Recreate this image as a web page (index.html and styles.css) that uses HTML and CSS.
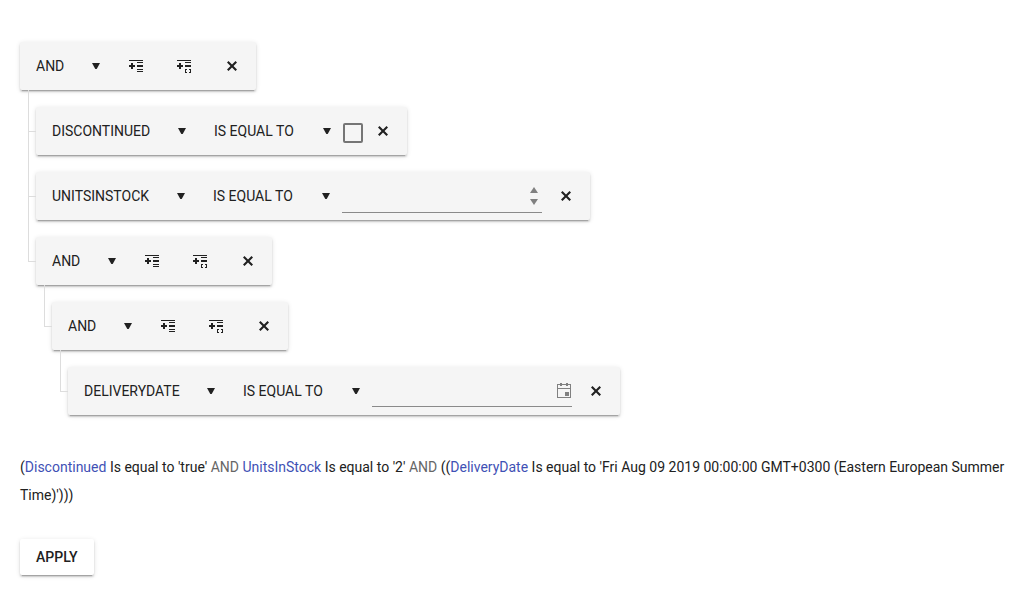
FILE: index.html
```html
<!DOCTYPE html>
<html lang="en">
<head>
<meta charset="utf-8">
<meta name="viewport" content="width=device-width, initial-scale=1">
<title>Filter</title>
<link rel="stylesheet" href="styles.css">
</head>
<body>
<svg class="symbols" aria-hidden="true">
  <symbol id="caret" viewBox="0 0 16 16"><path d="M4 5h8L8.700 11H7.300z"/></symbol>
  <symbol id="add-expression" viewBox="0 0 16 16"><path d="M1 2h14v1H1zM3 5h2v2h2v2H5v2H3V9H1V7h2zM9 4h6v1H9zM9 7h6v2H9zM9 11h6v1H9zM9 13h6v1H9z"/></symbol>
  <symbol id="add-group" viewBox="0 0 16 16"><path d="M1 2h14v1H1zM3 5h2v2h2v2H5v2H3V9H1V7h2zM9 4h6v1H9zM9 7h6v2H9zM9 11h2v1h-1v2h1v1H9zM13 11h2v4h-2v-1h1v-2h-1z"/></symbol>
  <symbol id="close" viewBox="0 0 16 16"><path d="M4.500 3L8 6.500 11.500 3 13 4.500 9.500 8 13 11.500 11.500 13 8 9.500 4.500 13 3 11.500 6.500 8 3 4.500z"/></symbol>
  <symbol id="calendar" viewBox="0 0 16 16"><path d="M1 2h3V1h2v1h4V1h2v1h3v14H1zM2 3v3h12V3h-2v1h-2V3H6v1H4V3zM2 7v8h12V7zM9 10h4v4H9z"/></symbol>
</svg>
<main class="page">
  <ul class="filter">
    <li class="filter-item">
      <div class="toolbar">
        <label class="dropdown"><select aria-label="Group logic"><option>AND</option></select><svg class="icon"><use href="#caret"/></svg></label>
        <button class="tool" type="button" aria-label="Add expression"><svg class="icon"><use href="#add-expression"/></svg></button>
        <button class="tool" type="button" aria-label="Add group"><svg class="icon"><use href="#add-group"/></svg></button>
        <button class="tool" type="button" aria-label="Close"><svg class="icon"><use href="#close"/></svg></button>
      </div>
      <ul class="filter-lines">
        <li class="filter-item">
          <div class="toolbar">
            <label class="dropdown"><select aria-label="Field"><option>DISCONTINUED</option></select><svg class="icon"><use href="#caret"/></svg></label>
            <label class="dropdown operator"><select aria-label="Operator"><option>IS EQUAL TO</option></select><svg class="icon"><use href="#caret"/></svg></label>
            <input class="checkbox" type="checkbox" aria-label="Discontinued value">
            <button class="tool" type="button" aria-label="Close"><svg class="icon"><use href="#close"/></svg></button>
          </div>
        </li>
        <li class="filter-item">
          <div class="toolbar">
            <label class="dropdown"><select aria-label="Field"><option>UNITSINSTOCK</option></select><svg class="icon"><use href="#caret"/></svg></label>
            <label class="dropdown operator"><select aria-label="Operator"><option>IS EQUAL TO</option></select><svg class="icon"><use href="#caret"/></svg></label>
            <div class="field field-number">
              <input type="text" inputmode="numeric" aria-label="Units in stock value">
              <span class="spinner">
                <button type="button" aria-label="Increase value"><svg viewBox="0 0 8 6"><path d="M0 6h8L4 0z"/></svg></button>
                <button type="button" aria-label="Decrease value"><svg viewBox="0 0 8 6"><path d="M0 0h8L4 6z"/></svg></button>
              </span>
            </div>
            <button class="tool" type="button" aria-label="Close"><svg class="icon"><use href="#close"/></svg></button>
          </div>
        </li>
        <li class="filter-item">
          <div class="toolbar">
            <label class="dropdown"><select aria-label="Group logic"><option>AND</option></select><svg class="icon"><use href="#caret"/></svg></label>
            <button class="tool" type="button" aria-label="Add expression"><svg class="icon"><use href="#add-expression"/></svg></button>
            <button class="tool" type="button" aria-label="Add group"><svg class="icon"><use href="#add-group"/></svg></button>
            <button class="tool" type="button" aria-label="Close"><svg class="icon"><use href="#close"/></svg></button>
          </div>
          <ul class="filter-lines">
            <li class="filter-item">
              <div class="toolbar">
                <label class="dropdown"><select aria-label="Group logic"><option>AND</option></select><svg class="icon"><use href="#caret"/></svg></label>
                <button class="tool" type="button" aria-label="Add expression"><svg class="icon"><use href="#add-expression"/></svg></button>
                <button class="tool" type="button" aria-label="Add group"><svg class="icon"><use href="#add-group"/></svg></button>
                <button class="tool" type="button" aria-label="Close"><svg class="icon"><use href="#close"/></svg></button>
              </div>
              <ul class="filter-lines">
                <li class="filter-item">
                  <div class="toolbar">
                    <label class="dropdown"><select aria-label="Field"><option>DELIVERYDATE</option></select><svg class="icon"><use href="#caret"/></svg></label>
                    <label class="dropdown operator"><select aria-label="Operator"><option>IS EQUAL TO</option></select><svg class="icon"><use href="#caret"/></svg></label>
                    <div class="field field-date">
                      <input type="text" aria-label="Delivery date value">
                      <button class="calendar" type="button" aria-label="Open calendar"><svg class="icon"><use href="#calendar"/></svg></button>
                    </div>
                    <button class="tool" type="button" aria-label="Close"><svg class="icon"><use href="#close"/></svg></button>
                  </div>
                </li>
              </ul>
            </li>
          </ul>
        </li>
      </ul>
    </li>
  </ul>
  <p class="preview">(<span class="name">Discontinued</span> Is equal to 'true' <span class="logic">AND</span> <span class="name">UnitsInStock</span> Is equal to '2' <span class="logic">AND</span> ((<span class="name">DeliveryDate</span> Is equal to 'Fri Aug 09 2019 00:00:00 GMT+0300 (Eastern European Summer Time)')))</p>
  <button class="apply" type="button">APPLY</button>
</main>
</body>
</html>
```
FILE: styles.css
```css
* {
  box-sizing: border-box;
}

body {
  margin: 0;
  background: #fff;
  color: #212121;
  font: 14px/28px Roboto, sans-serif;
}

button,
input,
select {
  margin: 0;
  padding: 0;
  border: 0;
  border-radius: 0;
  background: transparent;
  color: inherit;
  font: inherit;
}

.symbols {
  display: none;
}

.page {
  padding: 42px 12px 16px 20px;
}

.filter,
.filter-lines {
  display: grid;
  gap: 17px;
  margin: 0;
  padding: 0;
  list-style: none;
}

.filter-lines {
  margin-top: 17px;
  padding-left: 16px;
}

.filter-item {
  position: relative;
}

/* Connector lines between a group and its children */
.filter-lines > .filter-item::before,
.filter-lines > .filter-item::after {
  content: "";
  position: absolute;
  left: -8px;
  background: #ddd;
}

.filter-lines > .filter-item::before {
  top: 24px;
  width: 8px;
  height: 1px;
}

.filter-lines > .filter-item::after {
  top: -17px;
  bottom: 0;
  width: 1px;
}

.filter-lines > .filter-item:last-child::after {
  bottom: auto;
  height: 42px;
}

.toolbar {
  display: flex;
  align-items: center;
  width: fit-content;
  height: 48px;
  border-radius: 2px;
  background: #f5f5f5;
  box-shadow: 0 3px 1px -2px rgba(0, 0, 0, .2), 0 2px 2px rgba(0, 0, 0, .14), 0 1px 5px rgba(0, 0, 0, .12);
}

.icon {
  display: block;
  width: 16px;
  height: 16px;
  fill: currentColor;
}

.dropdown {
  display: grid;
  align-items: center;
}

.dropdown select,
.dropdown .icon {
  grid-area: 1 / 1;
}

.dropdown select {
  height: 48px;
  padding: 0 47px 0 16px;
  appearance: none;
}

.operator select {
  padding-right: 48px;
}

.dropdown .icon {
  justify-self: end;
  margin-right: 8px;
  pointer-events: none;
}

.tool {
  display: grid;
  place-items: center;
  width: 48px;
  height: 48px;
}

.checkbox {
  width: 20px;
  height: 20px;
  margin: 4px -4px 0 0;
  border: 2px solid #757575;
  border-radius: 2px;
  appearance: none;
}

.checkbox:checked {
  background: #3f51b5;
}

.field {
  display: flex;
  align-items: center;
  width: 200px;
  border-bottom: 1px solid #8a8a8a;
  color: #808080;
}

.field-number {
  height: 34px;
}

.field-date {
  height: 32px;
}

.field input {
  flex: 1;
  min-width: 0;
  height: 100%;
  color: #212121;
}

.calendar {
  margin-bottom: 2px;
}

.spinner {
  display: grid;
  gap: 6px;
  margin-right: 4px;
}

.spinner button,
.spinner svg {
  display: block;
  width: 8px;
  height: 6px;
  fill: currentColor;
}

.preview {
  margin: 38px 0 30px;
}

.name {
  color: #3f51b5;
}

.logic {
  color: #666;
}

.apply {
  display: block;
  height: 36px;
  padding: 0 16px;
  border-radius: 2px;
  background: #fff;
  font-weight: 500;
  box-shadow: 0 3px 1px -2px rgba(0, 0, 0, .2), 0 2px 2px rgba(0, 0, 0, .14), 0 1px 5px rgba(0, 0, 0, .12);
}
```
